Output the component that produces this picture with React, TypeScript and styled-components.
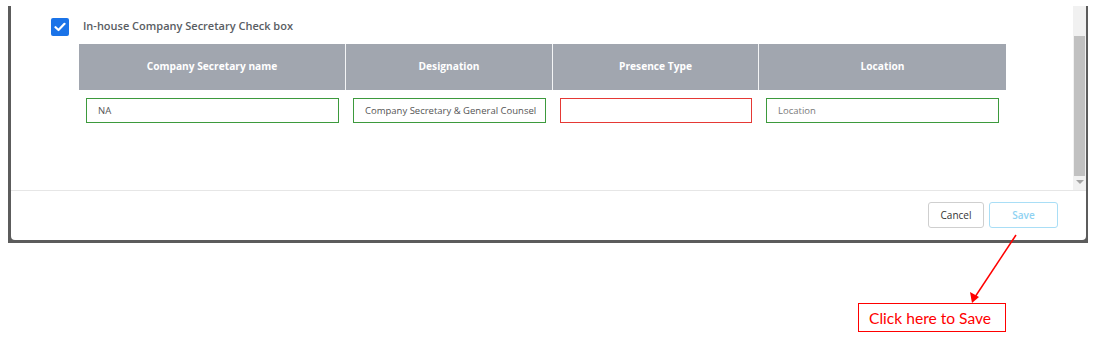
import React from "react";
import styled, { createGlobalStyle } from "styled-components";

const Global = createGlobalStyle`
  html, body { margin: 0; padding: 0; background: #ffffff; }
  body { font-family: "Open Sans", "Liberation Sans", sans-serif; }
  * { box-sizing: border-box; }
`;

const Page = styled.div`
  position: relative;
  width: 1120px;
  height: 347px;
  padding: 6px 0 0 8px;
  overflow: hidden;
`;

const Frame = styled.div`
  width: 1080px;
  height: 237px;
  background: #5c5c5c;
  padding: 0 2px 3px 3px;
`;

const Dialog = styled.div`
  height: 100%;
  background: #ffffff;
  border-bottom-left-radius: 4px;
  border-bottom-right-radius: 4px;
  display: flex;
  flex-direction: column;
`;

const Body = styled.div`
  height: 184px;
  display: flex;
`;

const Content = styled.div`
  flex: 1;
  padding: 12px 0 0 40px;
`;

const Scrollbar = styled.div`
  width: 13px;
  background: #f1f1f1;
  display: flex;
  flex-direction: column;
  align-items: center;
  padding-top: 30px;
`;

const Thumb = styled.div`
  width: 11px;
  height: 140px;
  background: #c1c1c1;
`;

const DownArrow = styled.div`
  margin-top: 4px;
  width: 0;
  height: 0;
  border-left: 4px solid transparent;
  border-right: 4px solid transparent;
  border-top: 4px solid #a3a3a3;
`;

const CheckRow = styled.label`
  display: flex;
  align-items: center;
  gap: 14px;
  height: 18px;
`;

const CheckBox = styled.span`
  width: 18px;
  height: 18px;
  border-radius: 2px;
  background: #1a73e8;
  display: flex;
  align-items: center;
  justify-content: center;
`;

const CheckLabel = styled.span`
  font-size: 11px;
  font-weight: 600;
  color: #595d63;
  margin-top: -4px;
`;

const Table = styled.div`
  margin: 8px 0 0 28px;
  width: 927px;
`;

const Grid = styled.div`
  display: grid;
  grid-template-columns: 267px 207px 206px 247px;
`;

const HeadCell = styled.div<{ $last?: boolean }>`
  height: 46px;
  background: #a1a6af;
  color: #ffffff;
  font-size: 10.2px;
  font-weight: 700;
  display: flex;
  align-items: center;
  justify-content: center;
  padding-bottom: 2px;
  border-right: ${(p) => (p.$last ? "none" : "1.5px solid #f4f5f6")};
`;

const Cell = styled.div`
  padding: 8px 7px 0 7px;
`;

const Field = styled.div<{ $invalid?: boolean; $placeholder?: boolean }>`
  height: 25px;
  border: 1px solid ${(p) => (p.$invalid ? "#e53935" : "#3d9a3d")};
  font-size: 9.5px;
  color: ${(p) => (p.$placeholder ? "#7a7a7a" : "#555555")};
  display: flex;
  align-items: center;
  padding-left: 11px;
`;

const Footer = styled.div`
  flex: 1;
  border-top: 1px solid #e6e6e6;
  display: flex;
  justify-content: flex-end;
  align-items: flex-start;
  gap: 5px;
  padding: 11px 28px 0 0;
`;

const Button = styled.button<{ $primary?: boolean }>`
  height: 26px;
  padding: 0;
  width: ${(p) => (p.$primary ? "69px" : "56px")};
  background: #ffffff;
  border: 1px solid ${(p) => (p.$primary ? "#a9def6" : "#cfcfcf")};
  border-radius: 3px;
  font-family: "Open Sans", "Liberation Sans", sans-serif;
  font-size: 10px;
  font-weight: ${(p) => (p.$primary ? 600 : 400)};
  color: ${(p) => (p.$primary ? "#8fd2f2" : "#333333")};
`;

const Callout = styled.div`
  margin: 60px 0 0 850px;
  width: 148px;
  height: 29px;
  border: 1px solid #ff0000;
  color: #ff0000;
  font-family: "Lato", "Liberation Sans", sans-serif;
  font-size: 15.6px;
  display: flex;
  align-items: center;
  padding-left: 10px;
`;

const Overlay = styled.svg`
  position: absolute;
  left: 0;
  top: 0;
  pointer-events: none;
`;

const columns = ["Company Secretary name", "Designation", "Presence Type", "Location"];

export default function App() {
  return (
    <>
      <Global />
      <Page>
        <Frame>
          <Dialog>
            <Body>
              <Content>
                <CheckRow>
                  <CheckBox>
                    <svg width="12" height="10" viewBox="0 0 12 10">
                      <path d="M1.5 5.2 L4.5 8 L10.5 1.8" stroke="#fff" strokeWidth="2.2" fill="none" strokeLinecap="round" strokeLinejoin="round" />
                    </svg>
                  </CheckBox>
                  <CheckLabel>In-house Company Secretary Check box</CheckLabel>
                </CheckRow>
                <Table>
                  <Grid>
                    {columns.map((c, i) => (
                      <HeadCell key={c} $last={i === columns.length - 1}>
                        {c}
                      </HeadCell>
                    ))}
                  </Grid>
                  <Grid>
                    <Cell>
                      <Field>NA</Field>
                    </Cell>
                    <Cell>
                      <Field>Company Secretary &amp; General Counsel</Field>
                    </Cell>
                    <Cell>
                      <Field $invalid />
                    </Cell>
                    <Cell>
                      <Field $placeholder>Location</Field>
                    </Cell>
                  </Grid>
                </Table>
              </Content>
              <Scrollbar>
                <Thumb />
                <DownArrow />
              </Scrollbar>
            </Body>
            <Footer>
              <Button>Cancel</Button>
              <Button $primary>Save</Button>
            </Footer>
          </Dialog>
        </Frame>
        <Callout>Click here to Save</Callout>
        <Overlay width="1120" height="347" viewBox="0 0 1120 347">
          <line x1="1016" y1="235" x2="975" y2="297" stroke="#ff0000" strokeWidth="1.5" />
          <polygon points="972,303 970,292 979,297" fill="#ff0000" />
        </Overlay>
      </Page>
    </>
  );
}
